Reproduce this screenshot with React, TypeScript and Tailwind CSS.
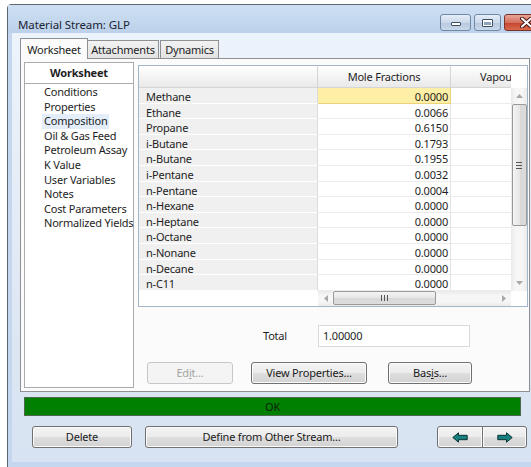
import React from "react";

const components = [
  "Methane",
  "Ethane",
  "Propane",
  "i-Butane",
  "n-Butane",
  "i-Pentane",
  "n-Pentane",
  "n-Hexane",
  "n-Heptane",
  "n-Octane",
  "n-Nonane",
  "n-Decane",
  "n-C11",
];
const fractions = [
  "0.0000",
  "0.0066",
  "0.6150",
  "0.1793",
  "0.1955",
  "0.0032",
  "0.0004",
  "0.0000",
  "0.0000",
  "0.0000",
  "0.0000",
  "0.0000",
  "0.0000",
];
const pages = [
  "Conditions",
  "Properties",
  "Composition",
  "Oil & Gas Feed",
  "Petroleum Assay",
  "K Value",
  "User Variables",
  "Notes",
  "Cost Parameters",
  "Normalized Yields",
];

function Button({
  className,
  disabled,
  children,
}: {
  className: string;
  disabled?: boolean;
  children: React.ReactNode;
}) {
  return (
    <div
      className={
        "flex items-center justify-center rounded-[3px] border " +
        (disabled
          ? "border-[#c5c8ca] bg-[#f4f4f4] text-[#a3a3a3] "
          : "border-[#707070] bg-[linear-gradient(to_bottom,#f3f3f3_0%,#ececec_48%,#dedede_52%,#d2d2d2_100%)] text-[#1b1b1b] shadow-[inset_0_0_0_1px_#fbfbfb] ") +
        className
      }
    >
      {children}
    </div>
  );
}

function Tri({ dir }: { dir: "up" | "down" | "left" | "right" }) {
  const pts = {
    up: "0,4 3.5,0 7,4",
    down: "0,0 3.5,4 7,0",
    left: "4,0 0,3.5 4,7",
    right: "0,0 4,3.5 0,7",
  }[dir];
  const vert = dir === "up" || dir === "down";
  return (
    <svg width={vert ? 7 : 4} height={vert ? 4 : 7} viewBox={vert ? "0 0 7 4" : "0 0 4 7"}>
      <polygon points={pts} fill="#a8a8a8" />
    </svg>
  );
}

function NavArrow({ left }: { left?: boolean }) {
  return (
    <svg width="16" height="11" viewBox="0 0 16 11">
      <path
        d={
          left
            ? "M0.8 5.5 L6.5 0.8 L6.5 3.3 L15.2 3.3 L15.2 7.7 L6.5 7.7 L6.5 10.2 Z"
            : "M15.2 5.5 L9.5 0.8 L9.5 3.3 L0.8 3.3 L0.8 7.7 L9.5 7.7 L9.5 10.2 Z"
        }
        fill="#15807e"
        stroke="#0c3332"
        strokeWidth="1"
        strokeLinejoin="round"
      />
    </svg>
  );
}

export default function App() {
  return (
    <div className="w-[531px] h-[467px] overflow-hidden bg-white pl-[7px] pt-[4px] font-['Noto_Sans',sans-serif] text-[11px] tracking-[-0.2px] text-[#1e1e1e]">
      {/* window frame */}
      <div className="w-[548px] h-[470px] flex flex-col border border-[#5b6673] rounded-tl-[4px] bg-[#c4d7ee]">
        {/* title bar */}
        <div className="h-[28px] shrink-0 flex bg-[linear-gradient(to_bottom,#cddff2,#bcd1ea)]">
          <div className="pl-[10px] pt-[12px] text-[11.5px] leading-[15px] text-[#1a2533] tracking-[-0.1px]">
            Material Stream: GLP
          </div>
          <div className="ml-auto mr-[5px] mt-[9px] flex gap-[3px] h-[17px]">
            <div className="w-[31px] h-full rounded-[3px] border border-[#6f88a6] bg-[linear-gradient(to_bottom,#e6eef8,#cbd9ea_50%,#b7c9df_51%,#c9d8ea)] flex items-end justify-center pb-[4px]">
              <div className="w-[10px] h-[4px] rounded-[1px] bg-white border border-[#3d4d62]" />
            </div>
            <div className="w-[27px] h-full rounded-[3px] border border-[#6f88a6] bg-[linear-gradient(to_bottom,#e6eef8,#cbd9ea_50%,#b7c9df_51%,#c9d8ea)] flex items-center justify-center">
              <div className="w-[11px] h-[8px] rounded-[1px] border border-[#3d4d62] bg-white p-[1px] pt-[2px]">
                <div className="w-full h-full bg-[#8fa3bb]" />
              </div>
            </div>
            <div className="w-[45px] h-full rounded-[3px] border border-[#7a3328] bg-[linear-gradient(to_bottom,#e8a497,#d4705e_50%,#c4432c_51%,#d86b4f)] flex items-center justify-center">
              <svg width="13" height="11" viewBox="0 0 13 11">
                <path
                  d="M2 1.5 L11 9.5 M11 1.5 L2 9.5"
                  stroke="#4a1a12"
                  strokeWidth="4"
                  strokeLinecap="round"
                />
                <path
                  d="M2 1.5 L11 9.5 M11 1.5 L2 9.5"
                  stroke="#ffffff"
                  strokeWidth="2"
                  strokeLinecap="round"
                />
              </svg>
            </div>
          </div>
        </div>

        {/* client area */}
        <div className="ml-[4px] mr-[4px] h-[429px] shrink-0 flex flex-col bg-[linear-gradient(to_bottom,#edf3fb,#dfe8f4_60%,#d7e3f2)]">
          {/* tab strip */}
          <div className="mt-[4px] h-[21px] pl-[8px] flex items-end">
            <div className="relative z-10 w-[68px] h-[21px] -mb-px border border-b-0 border-[#8e9094] bg-[#fbfbfb] flex justify-center pt-[3px] leading-[15px]">
              Worksheet
            </div>
            <div className="-ml-px w-[72px] h-[18px] border border-b-0 border-[#8e9094] bg-[linear-gradient(to_bottom,#f2f2f2,#e3e3e3)] flex justify-center pt-[1px] leading-[16px]">
              Attachments
            </div>
            <div className="ml-[1px] w-[59px] h-[18px] border border-b-0 border-[#8e9094] bg-[linear-gradient(to_bottom,#f2f2f2,#e3e3e3)] flex justify-center pt-[1px] leading-[16px]">
              Dynamics
            </div>
          </div>

          {/* tab page */}
          <div className="w-[510px] h-[334px] ml-[8px] border border-[#8e9094] bg-[#fbfbfb] flex">
            {/* page list */}
            <div className="ml-[3px] mt-[3px] w-[110px] flex flex-col">
              <div className="h-[22px] border border-[#a9abae] bg-white flex items-center justify-center font-bold leading-[14px]">
                Worksheet
              </div>
              <div className="h-[305px] -mt-px border border-[#a9abae] bg-white pt-[1px] flex flex-col items-start">
                {pages.map((p) => (
                  <div
                    key={p}
                    className={
                      "ml-[17px] px-[2px] h-[14.6px] leading-[14.6px] whitespace-nowrap " +
                      (p === "Composition" ? "bg-[#e3eefa]" : "")
                    }
                  >
                    {p}
                  </div>
                ))}
              </div>
            </div>

            {/* composition area */}
            <div className="ml-[4px] mt-[6px] flex flex-col">
              {/* grid */}
              <div className="w-[390px] border border-[#a3b5c9] bg-white flex flex-col">
                {/* header */}
                <div className="h-[22px] flex">
                  <div className="w-[179px] border-r border-b border-[#d5d5d5] bg-[linear-gradient(to_bottom,#ffffff,#f3f3f3_55%,#e9e9e9)]" />
                  <div className="w-[133px] border-r border-b border-[#d5d5d5] bg-[linear-gradient(to_bottom,#ffffff,#f3f3f3_55%,#e9e9e9)] flex items-center justify-center pt-[1px] leading-[14px]">
                    Mole Fractions
                  </div>
                  <div className="w-[60px] border-b border-[#d5d5d5] bg-[linear-gradient(to_bottom,#ffffff,#f3f3f3_55%,#e9e9e9)] flex items-center pl-[29px] pt-[1px] overflow-hidden whitespace-nowrap leading-[14px]">
                    Vapou
                  </div>
                  <div className="w-[16px] bg-white" />
                </div>

                {/* body */}
                <div className="flex">
                  <div className="flex flex-col">
                    {components.map((c, i) => (
                      <div key={c} className="h-[15.6px] flex">
                        <div className="w-[179px] border-r border-b border-r-[#dcdcdc] border-b-white bg-[#f0f0f0] pl-[7px] pt-[2px] leading-[14px]">
                          {c}
                        </div>
                        <div
                          className={
                            "w-[133px] border-r border-b text-right pr-[2px] pt-[2px] leading-[14px] " +
                            (i === 0
                              ? "bg-[#fdefa5] border-[#ecd27a]"
                              : "border-r-[#e2e2e2] border-b-[#ececec]")
                          }
                        >
                          {fractions[i]}
                        </div>
                        <div className="w-[60px] border-b border-[#ececec]" />
                      </div>
                    ))}
                    {/* horizontal scroll bar row */}
                    <div className="h-[15px] flex">
                      <div className="w-[179px] bg-white" />
                      <div className="w-[193px] bg-[linear-gradient(to_bottom,#eaeaea,#f6f6f6_30%,#f6f6f6_70%,#ebebeb)] flex items-center">
                        <div className="w-[15px] flex justify-center">
                          <Tri dir="left" />
                        </div>
                        <div className="w-[103px] h-[14px] rounded-[2px] border border-[#9a9a9a] bg-[linear-gradient(to_bottom,#f4f4f4,#e6e6e6_50%,#d9d9d9_51%,#dcdcdc)] flex items-center justify-center gap-[2px]">
                          <div className="w-px h-[6px] bg-[#555]" />
                          <div className="w-px h-[6px] bg-[#555]" />
                          <div className="w-px h-[6px] bg-[#555]" />
                        </div>
                        <div className="ml-auto w-[15px] flex justify-center">
                          <Tri dir="right" />
                        </div>
                      </div>
                    </div>
                  </div>
                  {/* vertical scroll bar */}
                  <div className="w-[16px] flex flex-col">
                    <div className="h-[202.8px] bg-[linear-gradient(to_right,#eaeaea,#f6f6f6_30%,#f6f6f6_70%,#ebebeb)] flex flex-col items-center">
                      <div className="h-[15px] flex items-center">
                        <Tri dir="up" />
                      </div>
                      <div className="mt-[1px] w-[15px] h-[122px] rounded-[2px] border border-[#9a9a9a] bg-[linear-gradient(to_right,#f4f4f4,#e6e6e6_50%,#d9d9d9_51%,#dcdcdc)] flex flex-col items-center justify-center gap-[2px]">
                        <div className="w-[6px] h-px bg-[#555]" />
                        <div className="w-[6px] h-px bg-[#555]" />
                        <div className="w-[6px] h-px bg-[#555]" />
                      </div>
                      <div className="mt-auto h-[15px] flex items-center">
                        <Tri dir="down" />
                      </div>
                    </div>
                    <div className="h-[15px] bg-white" />
                  </div>
                </div>
              </div>

              {/* total */}
              <div className="mt-[18px] flex items-center h-[22px]">
                <div className="ml-[125px] w-[55px] leading-[14px]">Total</div>
                <div className="w-[152px] h-[22px] border border-[#dadada] bg-white pl-[4px] leading-[20px]">
                  1.00000
                </div>
              </div>

              {/* actions */}
              <div className="mt-[15px] flex h-[22px]">
                <Button disabled className="ml-[9px] w-[86px]">
                  <span>
                    Ed<span className="underline">i</span>t...
                  </span>
                </Button>
                <Button className="ml-[18px] w-[116px]">View Properties...</Button>
                <Button className="ml-[21px] w-[84px]">
                  <span>
                    Bas<span className="underline">i</span>s...
                  </span>
                </Button>
              </div>
            </div>
          </div>

          {/* status bar */}
          <div className="mt-[5px] ml-[12px] w-[497px] h-[19px] border border-[#4c6b4c] bg-[#008000] flex items-center justify-center leading-[14px] text-[#0d1f0d]">
            OK
          </div>

          {/* bottom buttons */}
          <div className="mt-[10px] flex h-[22px]">
            <Button className="ml-[20px] w-[100px]">Delete</Button>
            <Button className="ml-[13px] w-[253px]">Define from Other Stream...</Button>
            <div className="ml-[39px] flex">
              <Button className="w-[46px] rounded-r-none">
                <NavArrow left />
              </Button>
              <Button className="-ml-px w-[45px] rounded-l-none">
                <NavArrow />
              </Button>
            </div>
          </div>
        </div>
      </div>
    </div>
  );
}
